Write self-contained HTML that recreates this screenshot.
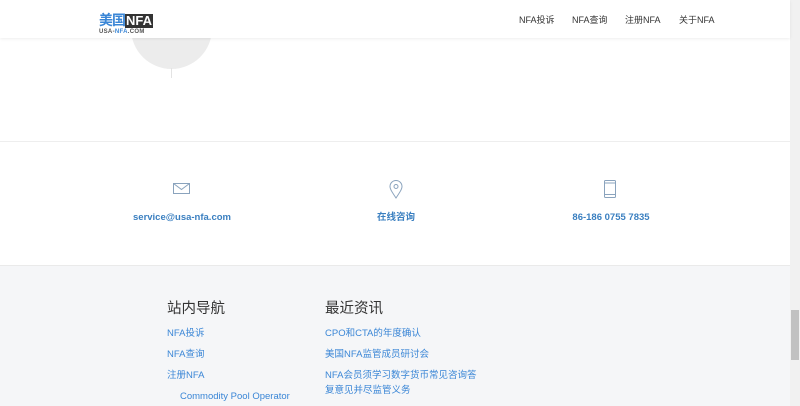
<!DOCTYPE html>
<html><head><meta charset="utf-8"><style>
*{margin:0;padding:0;box-sizing:border-box}
body{width:800px;height:406px;overflow:hidden;background:#fff;font-family:"Liberation Sans","Noto Sans CJK SC",sans-serif;position:relative}
.hdr{position:absolute;left:0;top:0;width:790px;height:38px;background:#fff;box-shadow:0 1px 3px rgba(0,0,0,.07);z-index:2}
.logo{position:absolute;left:99px;top:10px}
.logo .a{color:#3a86d6;font-size:14px;font-weight:bold;letter-spacing:-1px}
.logo .b{display:inline-block;background:#333;color:#fff;font-size:13px;font-weight:bold;padding:0 1px;line-height:14px}
.logo .c{font-size:6px;color:#555;font-weight:bold;letter-spacing:.3px;margin-top:-1px}
.nav{position:absolute;top:14px;font-size:9px;color:#333;line-height:12px}
.circle{position:absolute;left:131px;top:-12px;width:81px;height:81px;border-radius:50%;background:#ececec}
.vl{position:absolute;left:171px;top:68px;width:1px;height:10px;background:#e3e3e3}
.sep{position:absolute;left:0;top:141px;width:790px;height:1px;background:#eee}
.ct{position:absolute;top:212px;font-size:9.5px;font-weight:bold;color:#3a7fc0;text-align:center;width:200px;line-height:12px}
.ft{position:absolute;left:0;top:265px;width:790px;height:141px;background:#f5f6f8;border-top:1px solid #eaeaea}
.h{position:absolute;top:299px;font-size:14.5px;color:#333;line-height:20px}
.l{position:absolute;font-size:9.5px;color:#3a86d6;line-height:12px}
.sb{position:absolute;left:790px;top:0;width:10px;height:406px;background:#f1f1f1}
.th{position:absolute;left:791px;top:310px;width:8px;height:50px;background:#c1c1c1}
</style></head><body>
<div class="hdr">
<div class="logo"><span class="a">美国</span><span class="b">NFA</span><div class="c">USA-<span style="color:#3a86d6">NFA</span>.COM</div></div>
<div class="nav" style="left:519px">NFA投诉</div>
<div class="nav" style="left:572px">NFA查询</div>
<div class="nav" style="left:625px">注册NFA</div>
<div class="nav" style="left:679px">关于NFA</div>
</div>
<div class="circle"></div><div class="vl"></div>
<div class="sep"></div>
<svg style="position:absolute;left:173px;top:183px" width="18" height="12"><rect x="0.5" y="0.5" width="16" height="10" fill="none" stroke="#8aa3bd"/><path d="M0.5 0.5L8.5 6.5L16.5 0.5" fill="none" stroke="#8aa3bd"/></svg>
<svg style="position:absolute;left:389px;top:180px" width="14" height="19"><path d="M7 18C3 12 1 9 1 6.5A6 6 0 0 1 13 6.5C13 9 11 12 7 18Z" fill="none" stroke="#8aa3bd"/><circle cx="7" cy="6.5" r="2" fill="none" stroke="#8aa3bd"/></svg>
<svg style="position:absolute;left:604px;top:180px" width="13" height="19"><rect x="0.5" y="0.5" width="11" height="17" rx="1" fill="none" stroke="#8aa3bd"/><line x1="1" y1="3" x2="11" y2="3" stroke="#8aa3bd"/><line x1="1" y1="14.5" x2="11" y2="14.5" stroke="#8aa3bd"/></svg>
<div class="ct" style="left:82px">service@usa-nfa.com</div>
<div class="ct" style="left:296px">在线咨询</div>
<div class="ct" style="left:511px">86-186 0755 7835</div>
<div class="ft"></div>
<div class="h" style="left:167px">站内导航</div>
<div class="h" style="left:325px">最近资讯</div>
<div class="l" style="left:167px;top:328px">NFA投诉</div>
<div class="l" style="left:167px;top:349px">NFA查询</div>
<div class="l" style="left:167px;top:370px">注册NFA</div>
<div class="l" style="left:180px;top:391px">Commodity Pool Operator</div>
<div class="l" style="left:325px;top:328px">CPO和CTA的年度确认</div>
<div class="l" style="left:325px;top:349px">美国NFA监管成员研讨会</div>
<div class="l" style="left:325px;top:370px">NFA会员须学习数字货币常见咨询答</div>
<div class="l" style="left:325px;top:385px">复意见并尽监管义务</div>
<div class="sb"></div><div class="th"></div>
</body></html>
